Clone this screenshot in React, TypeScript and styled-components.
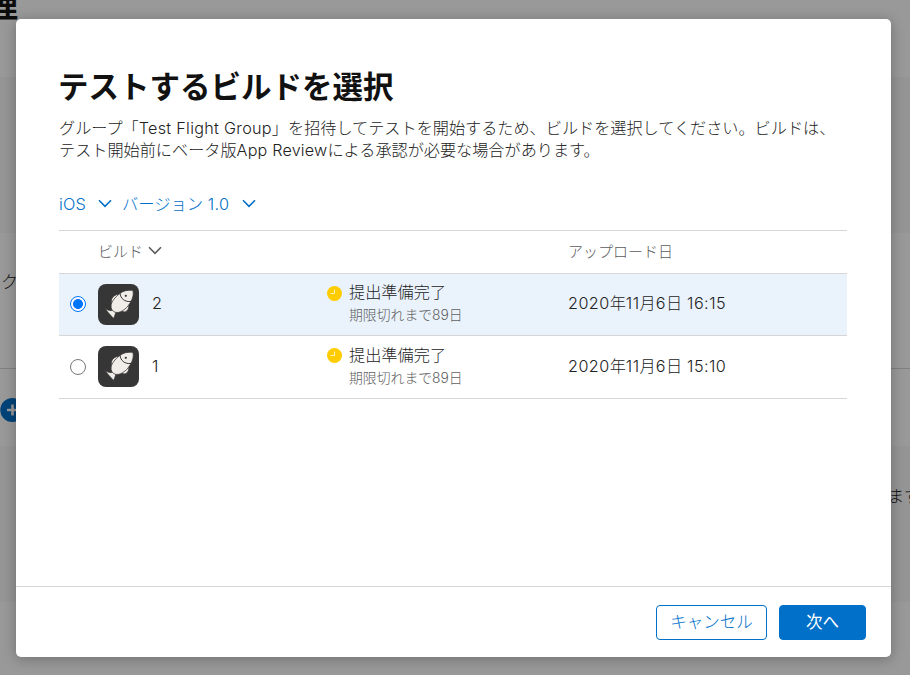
import React, { useState } from "react";
import styled, { createGlobalStyle } from "styled-components";

const GlobalStyle = createGlobalStyle`
  *, *::before, *::after { box-sizing: border-box; }
  body {
    margin: 0;
    overflow: hidden;
    font-family: Inter, "Noto Sans CJK JP", sans-serif;
    font-weight: 300;
    color: #222;
  }
  h1, p { margin: 0; }
`;

const Page = styled.div`
  position: relative;
  height: 675px;
  overflow: hidden;
  background: #999;
`;

const Band = styled.div<{ $height: number; $shaded?: boolean; $ruled?: boolean }>`
  position: relative;
  height: ${(p) => p.$height}px;
  background: ${(p) => (p.$shaded ? "#959595" : "#999")};
  border-bottom: ${(p) => (p.$ruled ? "1px solid #808080" : "0")};
`;

const Peek = styled.span<{ $x: number; $y: number; $size: number; $bold?: boolean }>`
  position: absolute;
  left: ${(p) => p.$x}px;
  top: ${(p) => p.$y}px;
  font-size: ${(p) => p.$size}px;
  line-height: 1;
  font-weight: ${(p) => (p.$bold ? 700 : 300)};
  color: #0c0c0c;
  white-space: nowrap;
`;

const AddBadge = styled.svg`
  position: absolute;
  left: 0;
  top: 29px;
`;

const Dialog = styled.section`
  position: absolute;
  left: 16px;
  top: 19px;
  width: 875px;
  height: 638px;
  display: flex;
  flex-direction: column;
  background: #fff;
  border-radius: 5px;
  box-shadow: 0 2px 14px rgba(0, 0, 0, 0.28);
`;

const Body = styled.div`
  flex: 1;
  padding: 46px 44px 0 43px;
`;

const Title = styled.h1`
  height: 44px;
  line-height: 44px;
  font-size: 30.5px;
  font-weight: 700;
  color: #111;
  text-indent: -1px;
  white-space: nowrap;
`;

const Description = styled.p`
  margin-top: 8px;
  font-size: 16.15px;
  line-height: 22px;
  white-space: nowrap;
`;

const Latin = styled.span<{ $spacing?: number }>`
  letter-spacing: ${(p) => p.$spacing ?? 0}px;
`;

const Filters = styled.div`
  display: flex;
  height: 24px;
  margin-top: 31px;
  gap: 10px;
`;

const FilterButton = styled.button`
  display: flex;
  align-items: center;
  gap: 12px;
  padding: 0;
  border: 0;
  background: none;
  font: inherit;
  font-size: 16.3px;
  line-height: 24px;
  color: #0070c9;
  white-space: nowrap;
`;

const ChevronIcon = styled.svg`
  flex: none;
  margin-bottom: 2px;
`;

const Table = styled.div`
  margin-top: 14px;
  border-top: 1px solid #d6d6d6;
`;

const columns = "39px 54px 175px 241px 1fr";

const HeaderRow = styled.div`
  display: grid;
  grid-template-columns: ${columns};
  align-items: center;
  height: 43px;
  border-bottom: 1px solid #d6d6d6;
  font-size: 15px;
  color: #5c5c5c;
`;

const HeaderCell = styled.div<{ $column: string }>`
  grid-column: ${(p) => p.$column};
  display: flex;
  align-items: center;
  gap: 5px;
  line-height: 22px;
  white-space: nowrap;
  ${ChevronIcon} {
    margin-bottom: 4px;
  }
`;

const Row = styled.label<{ $selected: boolean; $height: number }>`
  display: grid;
  grid-template-columns: ${columns};
  align-items: start;
  height: ${(p) => p.$height}px;
  border-bottom: 1px solid #d6d6d6;
  background: ${(p) => (p.$selected ? "#eaf3fb" : "#fff")};
  font-size: 16.2px;
`;

const Radio = styled.input`
  appearance: none;
  width: 16px;
  height: 16px;
  margin: 22px 0 0 11px;
  border: 1px solid #767676;
  border-radius: 50%;
  background: #fff;
  &:checked {
    border-color: #0075ff;
    background: radial-gradient(circle, #0075ff 4.6px, #fff 5.3px);
  }
  ${Row} + ${Row} > & {
    margin-top: 23px;
  }
`;

const AppIcon = styled.svg`
  margin-top: 10px;
`;

const Value = styled.span`
  margin-top: 17px;
  line-height: 24px;
  white-space: nowrap;
  ${Row} + ${Row} > & {
    margin-top: 18px;
  }
`;

const Status = styled.div`
  display: flex;
  gap: 7px;
  margin-top: 7px;
  ${Row} + ${Row} > & {
    margin-top: 8px;
  }
`;

const ClockIcon = styled.svg`
  margin-top: 5px;
  flex: none;
  ${Row} + ${Row} & {
    margin-top: 4px;
  }
`;

const StatusText = styled.div`
  line-height: 23px;
  white-space: nowrap;
`;

const Expiry = styled.div`
  font-size: 13.85px;
  line-height: 23px;
  color: #606060;
`;

const Footer = styled.footer`
  display: flex;
  justify-content: flex-end;
  gap: 12px;
  height: 71px;
  padding: 18px 25px 0;
  border-top: 1px solid #d6d6d6;
`;

const Button = styled.button<{ $primary?: boolean }>`
  width: ${(p) => (p.$primary ? 87 : 111)}px;
  height: 35px;
  padding: 0 0 2px;
  border: 1px solid #0070c9;
  border-radius: 4px;
  background: ${(p) => (p.$primary ? "#0070c9" : "#fff")};
  color: ${(p) => (p.$primary ? "#fff" : "#0070c9")};
  font: inherit;
  font-weight: ${(p) => (p.$primary ? 400 : 300)};
  font-size: 16.5px;
  line-height: 30px;
  white-space: nowrap;
`;

function Chevron() {
  return (
    <ChevronIcon width="14" height="9" viewBox="0 0 14 9" fill="none" stroke="currentColor" strokeWidth="1.6">
      <path d="M1 1.2 7 7.3 13 1.2" />
    </ChevronIcon>
  );
}

function FishIcon() {
  return (
    <AppIcon width="41" height="41" viewBox="0 0 41 41">
      <rect width="41" height="41" rx="8" fill="#363636" />
      <g fill="#f0ece8" stroke="#363636" strokeWidth="0.8" strokeLinejoin="round">
        <path d="M13.8 20.5C12.2 16 14.2 11.2 20.5 10.2L20 15Z" />
        <path d="M23.5 27C27 29.4 31.4 27 30.8 20L26 21Z" />
        <path d="M15.6 26.2C12.5 27 10 26.5 6.8 24.6C9 27.5 12.5 31 15.4 34.4C17 32.2 17.2 30 18 27.8Z" />
        <path d="M34.8 6.3C29.5 5.8 25 6.8 21.5 9.8C17 13.2 13.2 17.8 13 22C13 24.5 13.9 26.2 15.3 27.2C17 28.6 19.8 29 22.7 27.7C28.3 25.2 32.8 19.5 34.8 13C35.4 10.5 35.4 8.3 34.8 6.3Z" />
        <path d="M22 9.2C22.5 14.5 26.8 18.3 33 17.4" fill="none" strokeWidth="1" />
      </g>
      <circle cx="27.8" cy="11.8" r="1.1" fill="#363636" />
    </AppIcon>
  );
}

function Clock() {
  return (
    <ClockIcon width="15" height="15" viewBox="0 0 15 15">
      <circle cx="7.5" cy="7.5" r="7.5" fill="#ffcc00" />
      <path d="M7.5 3.5V7.5H3.6" fill="none" stroke="#fff3c4" strokeWidth="1" />
    </ClockIcon>
  );
}

const builds = [
  { build: "2", time: "16:15", height: 62 },
  { build: "1", time: "15:10", height: 63 },
];

export default function App() {
  const [selected, setSelected] = useState("2");
  return (
    <Page>
      <GlobalStyle />
      <Band $height={77}>
        <Peek $x={-13} $y={-10} $size={31} $bold>理</Peek>
      </Band>
      <Band $height={156} $shaded />
      <Band $height={136} $ruled>
        <Peek $x={1} $y={41} $size={17}>ク</Peek>
      </Band>
      <Band $height={77}>
        <AddBadge width="24" height="24" viewBox="0 0 24 24">
          <circle cx="12.3" cy="12" r="12" fill="#004379" />
          <path d="M12.5 6.5v11M7 12h11" stroke="#999" strokeWidth="2.6" />
        </AddBadge>
      </Band>
      <Band $height={156} $shaded>
        <Peek $x={888} $y={42} $size={16}>ます</Peek>
      </Band>
      <Dialog role="dialog">
        <Body>
          <Title>テストするビルドを選択</Title>
          <Description>
            グループ「<Latin $spacing={0.3}>Test Flight Group</Latin>」を招待してテストを開始するため、ビルドを選択してください。ビルドは、
            <br />
            テスト開始前にベータ版<Latin $spacing={0.2}>App Review</Latin>による承認が必要な場合があります。
          </Description>
          <Filters>
            <FilterButton>
              <Latin $spacing={0.2}>iOS</Latin>
              <Chevron />
            </FilterButton>
            <FilterButton>
              <span>バージョン <Latin $spacing={0.4}>1.0</Latin></span>
              <Chevron />
            </FilterButton>
          </Filters>
          <Table>
            <HeaderRow>
              <HeaderCell $column="2 / 4">ビルド<Chevron /></HeaderCell>
              <HeaderCell $column="5">アップロード日</HeaderCell>
            </HeaderRow>
            {builds.map((b) => (
              <Row key={b.build} $selected={selected === b.build} $height={b.height}>
                <Radio
                  type="radio"
                  name="build"
                  checked={selected === b.build}
                  onChange={() => setSelected(b.build)}
                />
                <FishIcon />
                <Value>{b.build}</Value>
                <Status>
                  <Clock />
                  <StatusText>
                    提出準備完了
                    <Expiry>期限切れまで89日</Expiry>
                  </StatusText>
                </Status>
                <Value>
                  <Latin $spacing={0.45}>2020</Latin>年<Latin $spacing={0.45}>11</Latin>月
                  <Latin $spacing={0.45}>6</Latin>日<Latin $spacing={0.45}> {b.time}</Latin>
                </Value>
              </Row>
            ))}
          </Table>
        </Body>
        <Footer>
          <Button>キャンセル</Button>
          <Button $primary>次へ</Button>
        </Footer>
      </Dialog>
    </Page>
  );
}
